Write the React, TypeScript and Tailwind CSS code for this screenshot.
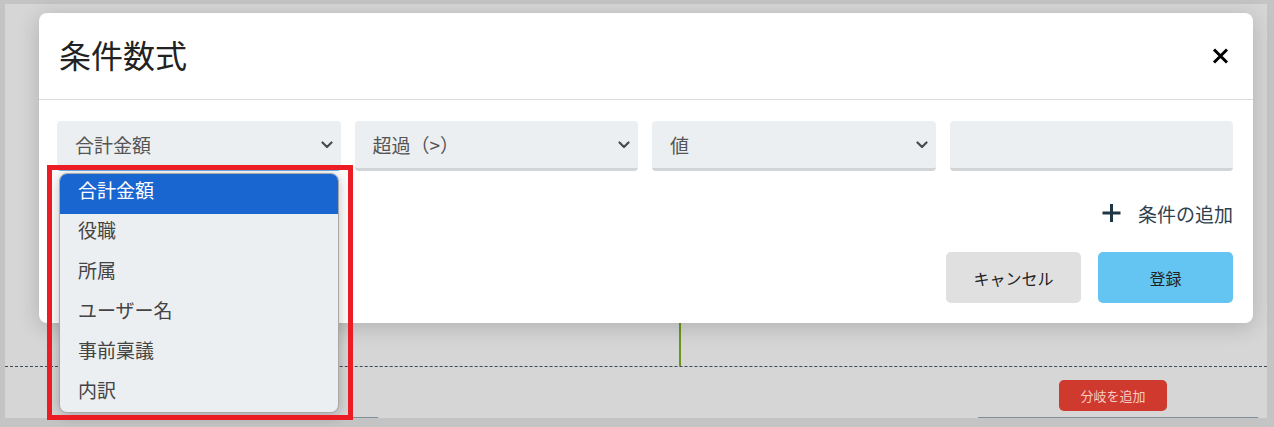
import React from "react";

const Chevron = () => (
  <svg width="12" height="8" viewBox="0 0 12 8" className="shrink-0">
    <path d="M1.5 1.5 L6 6 L10.5 1.5" fill="none" stroke="#4a4a4a" strokeWidth="2.2" strokeLinecap="round" strokeLinejoin="round" />
  </svg>
);

function SelectBox({ label, focused, chevron = true }: { label: string; focused?: boolean; chevron?: boolean }) {
  return (
    <div
      className={`h-[50px] bg-[#eceff1] rounded-[4px] border-b-[3px] ${focused ? "border-[#6fb3ea]" : "border-[#d2d5d8]"} flex items-center justify-between pl-[18px] pr-[8px] text-[19px] text-[#555]`}
    >
      <span className="leading-none">{label}</span>
      {chevron && <Chevron />}
    </div>
  );
}

const options = ["合計金額", "役職", "所属", "ユーザー名", "事前稟議", "内訳"];

export default function App() {
  return (
    <div className="relative w-[1274px] h-[427px] overflow-hidden bg-[#c4c4c4] font-['Noto_Sans_CJK_JP','Noto_Sans',sans-serif]">
      {/* page behind overlay */}
      <div className="ml-[5px] mr-[7px] mt-[4px] h-[414px] bg-[#d6d6d6] flex flex-col">
        <div className="h-[362px] flex pl-[674px] pt-[120px]">
          <div className="w-[2px] h-full bg-[#6b961e]" />
        </div>
        <div className="border-t border-dashed border-[#3b4a56]" />
        <div className="flex justify-end pr-[100px] pt-[13px]">
          <div className="w-[108px] h-[31px] rounded-[5px] bg-[#d0392e] flex items-center justify-center text-[13px] text-[#f4cdc6]">
            分岐を追加
          </div>
        </div>
        <div className="mt-auto flex h-[1px]">
          <div className="ml-[50px] w-[323px] h-[1px] bg-[#7f8e9b]" />
          <div className="ml-[600px] w-[280px] h-[1px] bg-[#7f8e9b]" />
        </div>
      </div>

      {/* modal */}
      <div className="absolute left-[39px] top-[13px] w-[1214px] h-[310px] bg-white rounded-[8px] shadow-[0_4px_22px_rgba(0,0,0,0.18)] flex flex-col">
        <div className="h-[87px] border-b border-[#dcdcdc] flex items-center justify-between pl-[20px] pr-[24px]">
          <h1 className="text-[32px] leading-none text-[#222] font-normal pb-[5px]">条件数式</h1>
          <svg width="17" height="16" viewBox="0 0 17 16">
            <path d="M2 1.5 L15 14.5 M15 1.5 L2 14.5" stroke="#000" strokeWidth="3" strokeLinecap="butt" />
          </svg>
        </div>
        <div className="pl-[18px] pr-[20px] pt-[21px] flex flex-col">
          <div className="grid grid-cols-4 gap-x-[14px]">
            <SelectBox label="合計金額" focused />
            <SelectBox label="超過（>）" />
            <SelectBox label="値" />
            <SelectBox label="" chevron={false} />
          </div>
          <div className="mt-[30px] h-[24px] flex justify-end items-center gap-[17px]">
            <svg width="19" height="20" viewBox="0 0 19 20">
              <path d="M9.5 1 V19 M0.5 10 H18.5" stroke="#1e3646" strokeWidth="3" />
            </svg>
            <span className="text-[19px] leading-none text-[#2e4150]">条件の追加</span>
          </div>
          <div className="mt-[27px] flex justify-end gap-[17px]">
            <button className="w-[135px] h-[51px] rounded-[5px] bg-[#e0e0e0] text-[16px] text-[#222]">キャンセル</button>
            <button className="w-[135px] h-[51px] rounded-[5px] bg-[#64c5f3] text-[16px] text-[#222]">登録</button>
          </div>
        </div>
      </div>

      {/* open dropdown list */}
      <div className="absolute left-[59px] top-[173px] w-[280px] h-[240px] rounded-[8px] bg-[#eceff1] border border-[#a8a8a8] shadow-[0_2px_14px_rgba(0,0,0,0.25)] overflow-hidden flex flex-col">
        {options.map((o, i) => (
          <div
            key={o}
            className={`h-[40px] shrink-0 flex items-center pl-[18px] pb-[9px] text-[19px] leading-none ${i === 0 ? "bg-[#1a66d1] text-white" : "text-[#444]"}`}
          >
            {o}
          </div>
        ))}
      </div>

      {/* annotation frame */}
      <div className="absolute left-[47px] top-[165px] w-[306px] h-[255px] border-[5px] border-[#ec1c24]" />
    </div>
  );
}
